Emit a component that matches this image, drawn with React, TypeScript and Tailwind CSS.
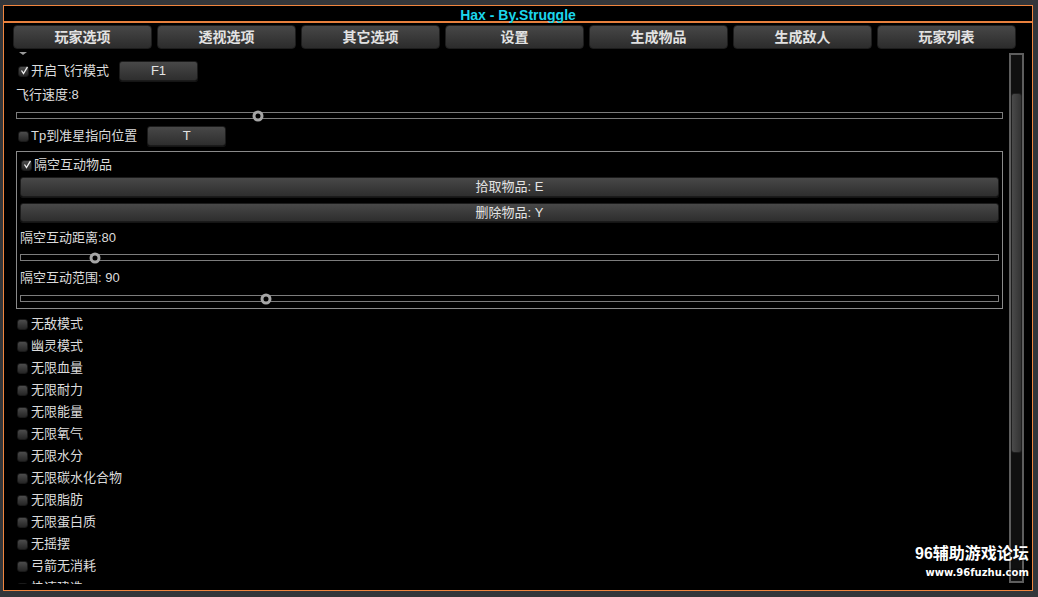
import React from "react"

const font = { fontFamily: '"Liberation Sans", "Noto Sans CJK SC", sans-serif' }

const tabs = ["玩家选项", "透视选项", "其它选项", "设置", "生成物品", "生成敌人", "玩家列表"]

const toggles = [
    "无敌模式",
    "幽灵模式",
    "无限血量",
    "无限耐力",
    "无限能量",
    "无限氧气",
    "无限水分",
    "无限碳水化合物",
    "无限脂肪",
    "无限蛋白质",
    "无摇摆",
    "弓箭无消耗",
    "快速建造",
]

function Check({ on = false }: { on?: boolean }) {
    return (
        <span className="relative flex h-[11px] w-[11px] shrink-0 items-center justify-center rounded-[3px] border border-[#1a1a1a] bg-gradient-to-b from-[#4c4c4c] to-[#262626]">
            {on && (
                <svg width="9" height="9" viewBox="0 0 9 9" className="absolute -top-[1px] left-[1px]">
                    <path d="M1.5 4.5 L3.5 7.5 L7.5 0.8" stroke="#f0f0f0" strokeWidth="1.3" fill="none" />
                </svg>
            )}
        </span>
    )
}

function Btn({ label, className = "" }: { label: string; className?: string }) {
    return (
        <div
            className={
                "flex shrink-0 items-center justify-center rounded-[3px] border border-[#1b1b1b] bg-gradient-to-b from-[#484848] to-[#2e2e2e] text-[13px] text-[#e4e4e4] shadow-[0_1px_0_#151515] " +
                className
            }>
            {label}
        </div>
    )
}

function Slider({ pos, className = "" }: { pos: number; className?: string }) {
    return (
        <div className={"relative h-[7px] shrink-0 border border-[#7c7c7c] " + className}>
            <span
                className="absolute top-1/2 h-[11px] w-[11px] -translate-x-1/2 -translate-y-1/2 rounded-full border-[3px] border-[#a6a6a6] bg-black"
                style={{ left: `${pos * 100}%` }}
            />
        </div>
    )
}

export default function App() {
    return (
        <div className="relative h-[597px] w-[1038px] overflow-hidden bg-[#33363a] pl-[3px] pt-[5px]" style={font}>
            <div className="flex h-[586px] w-[1030px] flex-col border border-[#f0853f] bg-black">
                {/* title */}
                <div className="h-[17px] shrink-0 border-b-2 border-[#e8803d] text-center text-[14px] font-bold leading-[18px] text-[#1cd6ec]">
                    Hax - By.Struggle
                </div>

                {/* tabs */}
                <div className="mt-[2px] flex h-[24px] shrink-0 gap-[5px] pl-[9px] pr-[16px]">
                    {tabs.map((t) => (
                        <div
                            key={t}
                            className="flex flex-1 items-center justify-center rounded-[4px] border border-[#1d1d1d] bg-gradient-to-b from-[#474747] to-[#2c2c2c] text-[14px] font-bold text-[#e2e2e2]">
                            {t}
                        </div>
                    ))}
                </div>

                {/* body */}
                <div className="flex h-[535px] shrink-0">
                    <div className="flex w-[1005px] flex-col overflow-hidden pl-[12px] pr-[6px] text-[13px] text-[#dcdcdc]">
                        <div className="h-[6px] shrink-0 pl-[3px] pt-[3px]">
                            <svg width="8" height="3" viewBox="0 0 8 3" className="block">
                                <path d="M0 0 H8 L4 3 Z" fill="#9a9a9a" />
                            </svg>
                        </div>

                        <div className="mt-[6px] flex h-[20px] shrink-0 items-center pl-[2px]">
                            <Check on />
                            <span className="ml-[2px]">开启飞行模式</span>
                            <Btn label="F1" className="ml-[10px] h-[20px] w-[79px]" />
                        </div>

                        <div className="mt-[5px] h-[18px] shrink-0 leading-[18px]">飞行速度:8</div>
                        <Slider pos={0.245} className="mt-[8px]" />

                        <div className="mt-[7px] flex h-[20px] shrink-0 items-center pl-[2px]">
                            <Check />
                            <span className="ml-[2px]">Tp到准星指向位置</span>
                            <Btn label="T" className="ml-[10px] h-[20px] w-[79px]" />
                        </div>

                        {/* group */}
                        <div className="mt-[5px] flex shrink-0 flex-col border border-[#8a8a8a] pb-[6px]">
                            <div className="mt-[5px] flex h-[16px] shrink-0 items-center pl-[4px]">
                                <Check on />
                                <span className="ml-[2px]">隔空互动物品</span>
                            </div>
                            <Btn label="拾取物品: E" className="mx-[3px] mt-[4px] h-[20px]" />
                            <Btn label="删除物品: Y" className="mx-[3px] mt-[6px] h-[19px]" />
                            <div className="mt-[8px] h-[16px] shrink-0 pl-[3px] leading-[16px]">隔空互动距离:80</div>
                            <Slider pos={0.0756} className="mx-[3px] mt-[8px]" />
                            <div className="mt-[9px] h-[16px] shrink-0 pl-[3px] leading-[16px]">隔空互动范围: 90</div>
                            <Slider pos={0.251} className="mx-[3px] mt-[9px]" />
                        </div>

                        <div className="mt-[4px] flex shrink-0 flex-col">
                            {toggles.map((t) => (
                                <div key={t} className="flex h-[22px] shrink-0 items-center gap-[3px] pl-[1px]">
                                    <Check />
                                    <span>{t}</span>
                                </div>
                            ))}
                        </div>
                    </div>

                    {/* scrollbar */}
                    <div className="mt-[4px] flex h-[530px] w-[15px] flex-col border-2 border-[#5e5e5e] bg-[#101010]">
                        <div className="mt-[38px] h-[360px] rounded-[3px] border border-[#1e1e1e] bg-gradient-to-r from-[#4a4a4a] to-[#333]" />
                    </div>
                </div>
            </div>

            {/* watermark */}
            <div className="absolute left-[915px] top-[544px] flex flex-col items-end text-white [text-shadow:0_0_2px_#000]">
                <span className="text-[16px] font-bold leading-[20px]">96辅助游戏论坛</span>
                <span className="mt-[3px] text-[10px] font-bold leading-[12px]" style={{ fontFamily: '"DejaVu Sans", sans-serif' }}>
                    www.96fuzhu.com
                </span>
            </div>
        </div>
    )
}
